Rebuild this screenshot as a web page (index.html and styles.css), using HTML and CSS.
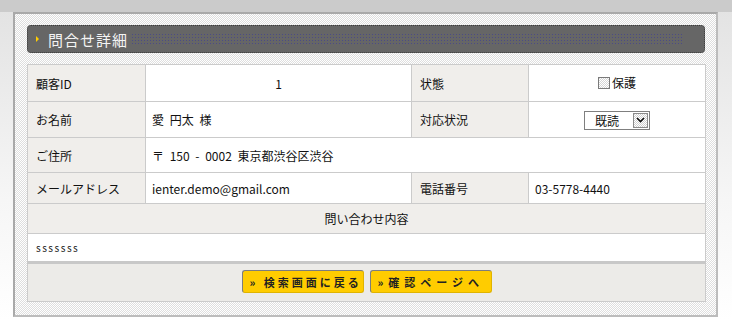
FILE: index.html
```html
<!DOCTYPE html>
<html lang="ja">
<head>
    <meta charset="UTF-8">
    <title>問合せ詳細</title>
    <link rel="stylesheet" href="styles.css">
</head>
<body>

    <div class="frame">
        <div class="title-bar">
            <span class="arrow"></span>
            <h2 class="title">問合せ詳細</h2>
            <span class="dots"></span>
        </div>

        <table class="detail">
            <colgroup>
                <col class="c1">
                <col class="c2">
                <col class="c3">
                <col class="c4">
            </colgroup>
            <tr class="r1">
                <th>顧客ID</th>
                <td class="center">1</td>
                <th>状態</th>
                <td class="center"><label class="check"><input type="checkbox">保護</label></td>
            </tr>
            <tr class="r2">
                <th>お名前</th>
                <td>愛 円太 様</td>
                <th>対応状況</th>
                <td class="center">
                    <span class="select">
                        <select>
                            <option>既読</option>
                            <option>未読</option>
                            <option>対応済</option>
                        </select>
                        <span class="select-btn">
                            <svg width="9" height="6" viewBox="0 0 9 6"><path d="M1 1 L4.5 4.5 L8 1" fill="none" stroke="#111" stroke-width="1.6"/></svg>
                        </span>
                    </span>
                </td>
            </tr>
            <tr class="r3">
                <th>ご住所</th>
                <td colspan="3">〒 150 - 0002 東京都渋谷区渋谷</td>
            </tr>
            <tr class="r4">
                <th>メールアドレス</th>
                <td>ienter.demo@gmail.com</td>
                <th>電話番号</th>
                <td>03-5778-4440</td>
            </tr>
            <tr class="r5">
                <th colspan="4" class="center">問い合わせ内容</th>
            </tr>
            <tr class="r6">
                <td colspan="4" class="message">sssssss</td>
            </tr>
            <tr class="r7">
                <td colspan="4" class="actions">
                    <div class="buttons">
                        <button type="button" class="btn">»&nbsp;検索画面に戻る</button>
                        <button type="button" class="btn wide">»確認ページへ</button>
                    </div>
                </td>
            </tr>
        </table>
    </div>

</body>
</html>
```

FILE: styles.css
```css
body {
    margin: 0;
    font-family: "Noto Sans CJK JP", "DejaVu Sans", sans-serif;
    font-size: 12px;
    color: #111;
    background:
        linear-gradient(#cbcbcb, #cbcbcb) 0 0 / 100% 12px no-repeat,
        linear-gradient(#e2e2e2, #f6f6f6 200px, #fff 320px);
    height: 335px;
    overflow: hidden;
}
.frame {
    box-sizing: border-box;
    width: 705px;
    height: 305px;
    margin: 12px 0 0 13px;
    padding: 11px 11px 0 12px;
    border: 2px solid #bcbcbc;
    border-top-color: #a9a9a9;
    border-left-color: #a9a9a9;
    background: repeating-conic-gradient(#fff 0 25%, #dedede 0 50%) 0 0 / 2px 2px;
}
.title-bar {
    box-sizing: border-box;
    height: 28px;
    display: flex;
    align-items: center;
    padding-left: 8px;
    background: #666;
    border: 1px dotted #3c3c3c;
    border-radius: 4px;
}
.arrow {
    width: 0;
    height: 0;
    border-left: 3px solid #ffcc00;
    border-top: 3px solid transparent;
    border-bottom: 3px solid transparent;
}
.title {
    margin: 0 2px 0 9px;
    font-size: 15px;
    font-weight: normal;
    letter-spacing: 1px;
    color: #f4f4f4;
}
.dots {
    flex: 1;
    height: 14px;
    margin-right: 20px;
    background:
        linear-gradient(90deg, #666 2px, transparent 2px) 0 0 / 3px 3px,
        linear-gradient(#666 2px, #4b4b86 2px) 0 0 / 3px 3px;
}
.detail {
    width: 678px;
    margin-top: 11px;
    border-collapse: collapse;
    table-layout: fixed;
    background: #fff;
}
.c1 { width: 118px; }
.c2 { width: 266px; }
.c3 { width: 117px; }
.c4 { width: 177px; }
th, td {
    border: 1px solid #cbcbcb;
    padding: 0 6px;
    text-align: left;
    font-weight: normal;
    word-spacing: 3px;
}
th {
    padding-left: 8px;
    background: repeating-conic-gradient(#fff 0 25%, #e0ddd6 0 50%) 0 0 / 2px 2px;
}
.center {
    text-align: center;
}
.r1 td, .r1 th { height: 36px; }
.r2 td, .r2 th { height: 35px; }
.r3 td, .r3 th { height: 34px; }
.r4 td, .r4 th { height: 30px; }
.r5 th { height: 29px; padding-left: 6px; }
.r6 td { height: 27px; }
.message {
    padding-left: 8px;
    font-size: 10px;
    letter-spacing: 1.5px;
    color: #222;
}
.check {
    display: inline-flex;
    align-items: center;
    gap: 2px;
}
.check input {
    appearance: none;
    width: 12px;
    height: 12px;
    margin: 0;
    border: 1px solid #7a7a7a;
    background: repeating-conic-gradient(#fff 0 25%, #d4d4d4 0 50%) 0 0 / 2px 2px;
}
.select {
    position: relative;
    display: inline-block;
    vertical-align: middle;
}
.select select {
    appearance: none;
    box-sizing: border-box;
    width: 66px;
    height: 19px;
    padding: 0 0 0 10px;
    border: 1px solid #7f7f7f;
    background: #fff;
    font: inherit;
    color: #111;
    display: block;
}
.select-btn {
    position: absolute;
    top: 2px;
    right: 2px;
    width: 15px;
    height: 15px;
    display: flex;
    align-items: center;
    justify-content: center;
    box-sizing: border-box;
    border: 1px solid #8a8a8a;
    background: repeating-conic-gradient(#fff 0 25%, #cfcfcf 0 50%) 0 0 / 2px 2px;
    pointer-events: none;
}
.r7 td {
    border-top: 3px solid #c8c8c8;
    padding: 6px 0 8px;
    background: repeating-conic-gradient(#fff 0 25%, #d8d6d0 0 50%) 0 0 / 2px 2px;
}
.buttons {
    display: flex;
    justify-content: center;
    gap: 6px;
}
.btn {
    box-sizing: border-box;
    width: 122px;
    height: 23px;
    padding: 0 0 0 7px;
    text-align: left;
    white-space: nowrap;
    overflow: hidden;
    background: #ffcc00;
    border: 1px solid #e0b400;
    border-top-color: #7d7d7d;
    border-left-color: #7d7d7d;
    border-radius: 3px;
    font-family: "Noto Sans CJK JP", sans-serif;
    font-size: 11px;
    font-weight: bold;
    letter-spacing: 3px;
    color: #222;
    cursor: pointer;
}
.btn.wide {
    letter-spacing: 5px;
}
```
